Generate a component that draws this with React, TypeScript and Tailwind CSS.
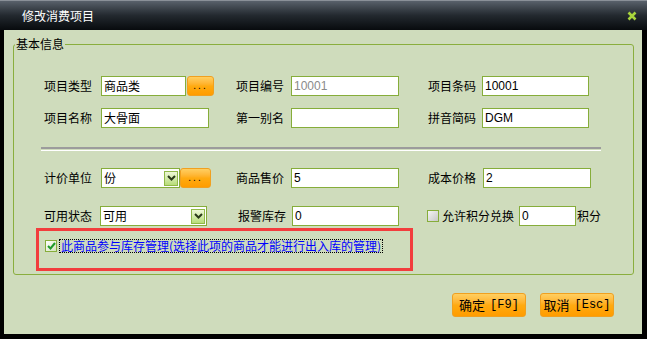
const cn = 'font-["Noto_Sans_CJK_SC","Noto_Sans",sans-serif]';

const Input = ({ value = "", w, gray = false, mono = false }: { value?: string; w: string; gray?: boolean; mono?: boolean }) => (
  <div
    className={`${w} h-[20px] bg-white border border-[#86ad3a] flex items-center pl-[2px] text-[12px] leading-none ${
      gray ? "text-[#8a8a8a]" : "text-black"
    } ${mono ? 'font-["Liberation_Sans",sans-serif]' : cn}`}
  >
    {value}
  </div>
);

const DotsButton = ({ w }: { w: string }) => (
  <div className={`${w} h-[20px] rounded-[3px] border border-[#f0a020] bg-gradient-to-b from-[#ffcf60] via-[#ffab10] to-[#ff9c00] flex items-center justify-center`}>
    <span className="text-[10px] leading-none tracking-[2px] text-black font-['Liberation_Sans',sans-serif]">...</span>
  </div>
);

const Arrow = () => (
  <div className="w-[14px] h-[15px] mr-[1px] border border-[#90b848] bg-gradient-to-b from-[#eef8d8] to-[#b8dc78] flex items-center justify-center">
    <svg width="9" height="6" viewBox="0 0 9 6">
      <polyline points="1,1 4.5,4.5 8,1" fill="none" stroke="#2a3a1a" strokeWidth="2" />
    </svg>
  </div>
);

const Select = ({ value, w }: { value: string; w: string }) => (
  <div className={`${w} h-[20px] bg-white border border-[#86ad3a] flex items-center justify-between pl-[2px] text-[12px] leading-none text-black ${cn}`}>
    <span>{value}</span>
    <Arrow />
  </div>
);

const Label = ({ children, w }: { children: string; w: string }) => (
  <span className={`${w} shrink-0 text-[12px] leading-none text-black ${cn}`}>{children}</span>
);

export default function App() {
  return (
    <div className="w-[647px] h-[339px] bg-black flex flex-col overflow-hidden">
      <div className="h-[30px] shrink-0 border-t border-[#8a9098] bg-gradient-to-b from-[#59616b] via-[#23292f] to-[#080b0e] flex items-center justify-between pl-[22px] pr-[10px]">
        <span className={`text-[12px] text-white ${cn}`}>修改消费项目</span>
        <svg width="10" height="10" viewBox="0 0 10 10">
          <path d="M1.5 1.5 L8.5 8.5 M8.5 1.5 L1.5 8.5" stroke="#a8d43c" strokeWidth="2.6" />
        </svg>
      </div>
      <div className="ml-[4px] mr-[5px] h-[304px] bg-[#cfdcbc] flex flex-col">
        <fieldset className="ml-[9px] mt-[7px] w-[621px] border border-[#8aae3e] rounded-[3px] px-0 pb-[3px]">
          <legend className={`ml-[1px] px-[1px] text-[12px] leading-[14px] text-black ${cn}`}>基本信息</legend>
          <div className="pl-[30px] pt-[25px] flex flex-col">
            <div className="flex items-center h-[20px]">
              <div className="w-[192px] flex items-center">
                <Label w="w-[57px]">项目类型</Label>
                <Input value="商品类" w="w-[85px]" />
                <div className="ml-[1px]"><DotsButton w="w-[27px]" /></div>
              </div>
              <div className="w-[192px] flex items-center">
                <Label w="w-[55px]">项目编号</Label>
                <Input value="10001" w="w-[108px]" gray mono />
              </div>
              <div className="flex items-center">
                <Label w="w-[54px]">项目条码</Label>
                <Input value="10001" w="w-[107px]" mono />
              </div>
            </div>
            <div className="flex items-center h-[20px] mt-[12px]">
              <div className="w-[192px] flex items-center">
                <Label w="w-[57px]">项目名称</Label>
                <Input value="大骨面" w="w-[108px]" />
              </div>
              <div className="w-[192px] flex items-center">
                <Label w="w-[55px]">第一别名</Label>
                <Input w="w-[108px]" />
              </div>
              <div className="flex items-center">
                <Label w="w-[54px]">拼音简码</Label>
                <Input value="DGM" w="w-[107px]" mono />
              </div>
            </div>
            <div className="mt-[19px] w-[560px] -ml-[3px]">
              <div className="h-[2px] bg-[#9c9c9c]" />
              <div className="h-[1px] mt-[1px] bg-white" />
            </div>
            <div className="flex items-center h-[20px] mt-[17px]">
              <div className="w-[192px] flex items-center">
                <Label w="w-[57px]">计价单位</Label>
                <Select value="份" w="w-[79px]" />
                <DotsButton w="w-[31px]" />
              </div>
              <div className="w-[192px] flex items-center">
                <Label w="w-[55px]">商品售价</Label>
                <Input value="5" w="w-[108px]" mono />
              </div>
              <div className="flex items-center">
                <Label w="w-[55px]">成本价格</Label>
                <Input value="2" w="w-[108px]" mono />
              </div>
            </div>
            <div className="flex items-center h-[20px] mt-[18px]">
              <div className="w-[194px] flex items-center">
                <Label w="w-[56px]">可用状态</Label>
                <Select value="可用" w="w-[107px]" />
              </div>
              <div className="w-[189px] flex items-center">
                <Label w="w-[54px]">报警库存</Label>
                <Input value="0" w="w-[107px]" mono />
              </div>
              <div className="flex items-center">
                <div className="w-[12px] h-[12px] border border-[#86ad3a] bg-gradient-to-br from-[#f4f4f4] to-[#c8c8c8]" />
                <span className={`ml-[3px] w-[77px] text-[12px] leading-none text-black ${cn}`}>允许积分兑换</span>
                <Input value="0" w="w-[57px]" mono />
                <span className={`ml-[1px] text-[12px] leading-none text-black ${cn}`}>积分</span>
              </div>
            </div>
            <div className="mt-[2px] ml-[-8px] w-[377px] h-[43px] border-[3px] border-[#f23d3d] flex items-start pl-[6px] pt-[9px]">
              <div className="w-[12px] h-[12px] border border-[#86ad3a] bg-gradient-to-br from-[#ffffff] to-[#d4e4bc] flex items-center justify-center">
                <svg width="9" height="8" viewBox="0 0 9 8">
                  <polyline points="1,4 3.5,6.5 8,1" fill="none" stroke="#1f9a2a" strokeWidth="2" />
                </svg>
              </div>
              <span className={`ml-[2px] -mt-[1px] px-[1px] border border-dotted border-black text-[12px] leading-[12px] text-[#0000ff] ${cn}`}>
                此商品参与库存管理(选择此项的商品才能进行出入库的管理)
              </span>
            </div>
          </div>
        </fieldset>
        <div className="flex justify-end gap-[14px] mr-[28px] mt-[18px]">
          <div className={`w-[74px] h-[24px] rounded-[3px] border border-[#f0a020] bg-gradient-to-b from-[#ffcf60] via-[#ffab10] to-[#ff9c00] flex items-center justify-center text-[13px] text-black ${cn}`}>
            确定 <span className="ml-[5px] text-[12px] font-['Liberation_Mono',monospace]">[F9]</span>
          </div>
          <div className={`w-[74px] h-[24px] rounded-[3px] border border-[#f0a020] bg-gradient-to-b from-[#ffcf60] via-[#ffab10] to-[#ff9c00] flex items-center justify-center text-[13px] text-black ${cn}`}>
            取消 <span className="ml-[5px] text-[12px] font-['Liberation_Mono',monospace]">[Esc]</span>
          </div>
        </div>
      </div>
    </div>
  );
}
